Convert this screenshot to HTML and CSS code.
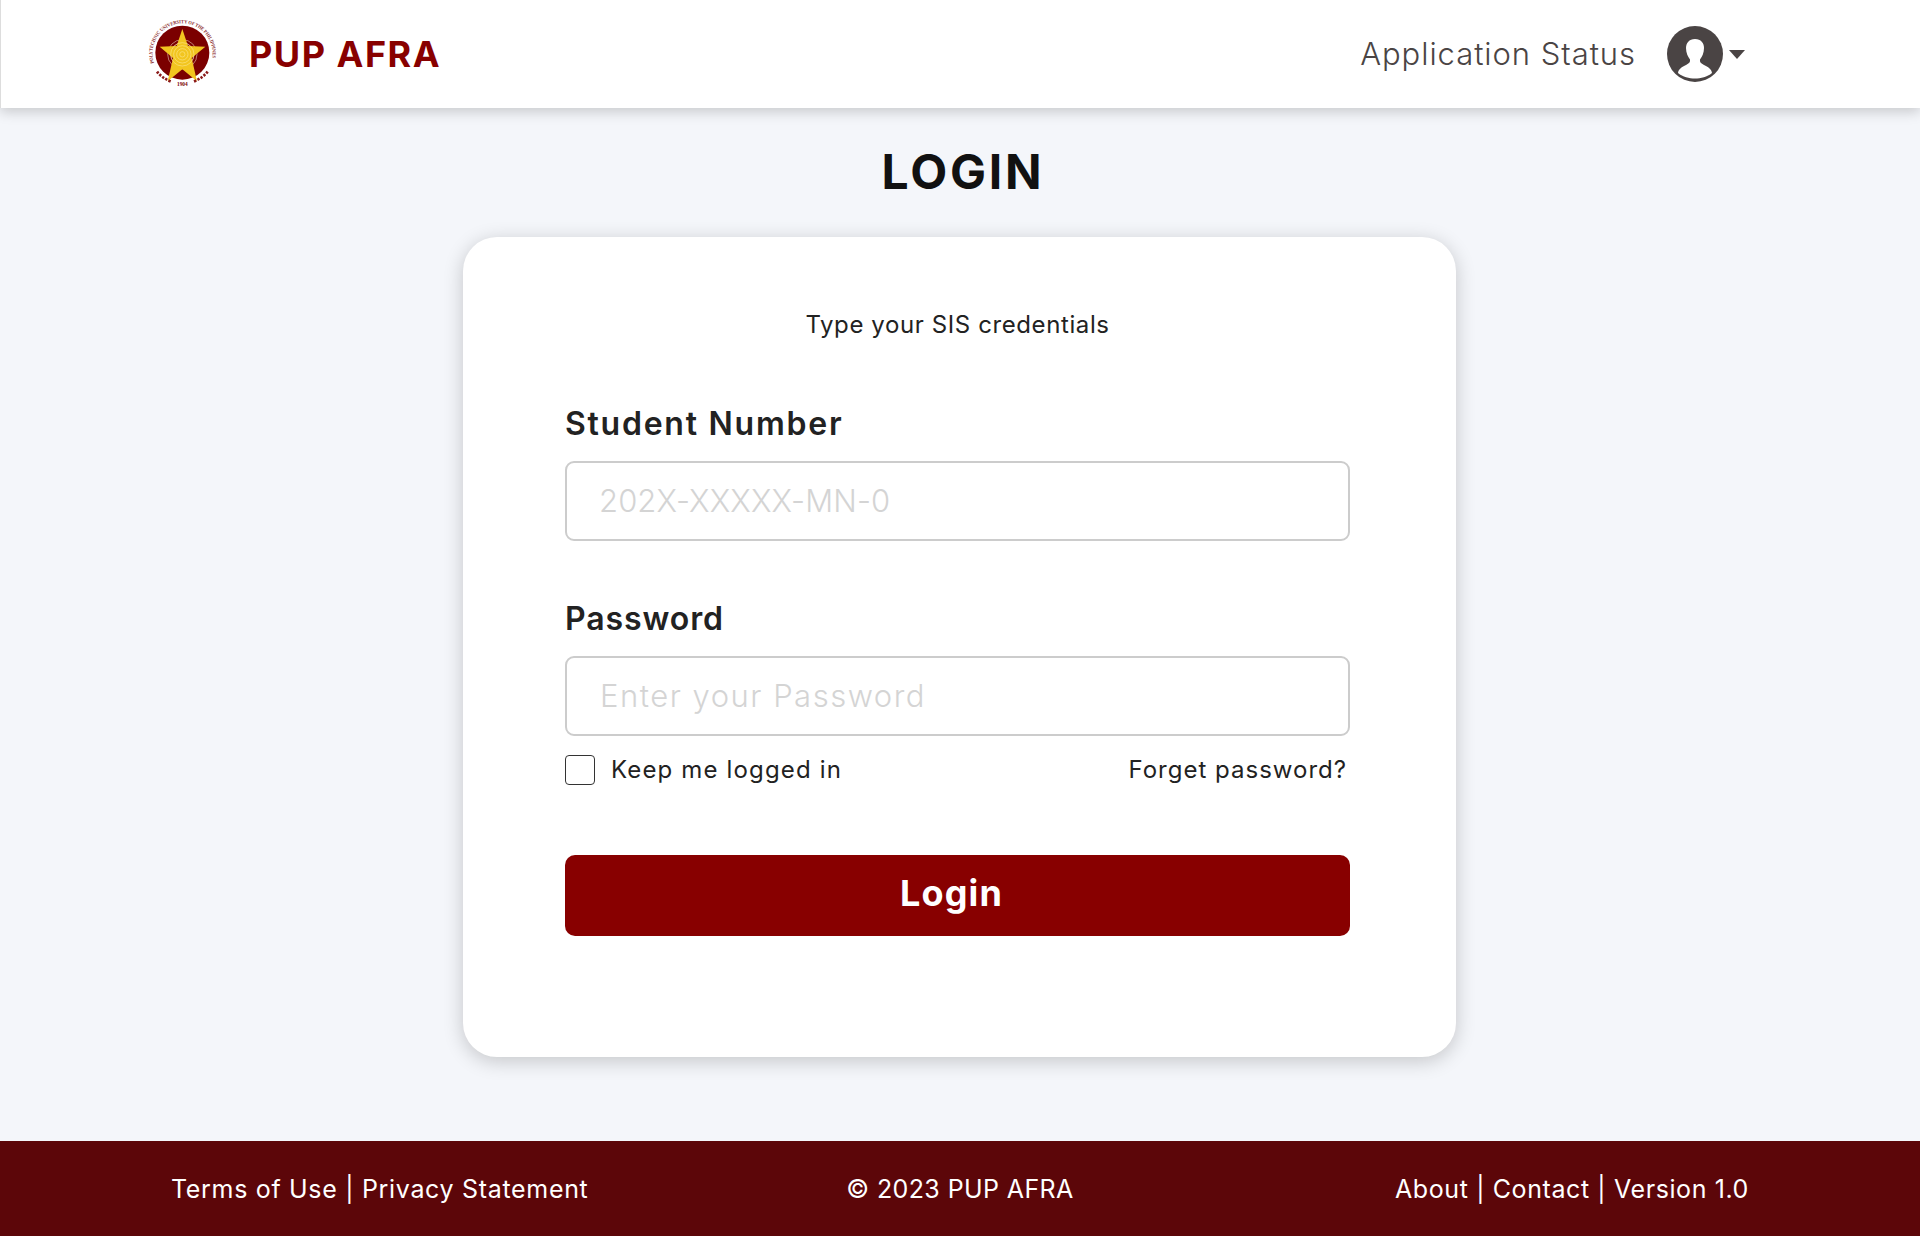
FILE: index.html
```html
<!DOCTYPE html>
<html lang="en">
<head>
<meta charset="utf-8">
<title>PUP AFRA</title>
<link rel="stylesheet" href="styles.css">
</head>
<body>
<header class="topbar">
  <div class="brand">
    <svg class="seal" viewBox="0 0 225 225" aria-hidden="true">
      <defs><path id="ringpath" d="M28 146 A 90 90 0 1 1 197 146"/></defs>
      <circle cx="112" cy="113" r="81" fill="#7b0000"/>
      <text class="seal-ring" textLength="325" lengthAdjust="spacingAndGlyphs"><textPath href="#ringpath" startOffset="2">POLYTECHNIC UNIVERSITY OF THE PHILIPPINES</textPath></text>
      <g fill="none" stroke="#e9c9b8" stroke-width="1.800"><circle cx="112" cy="118" r="44"/><circle cx="112" cy="118" r="35"/></g>
      <path d="M112 42 L129 93 L181 95 L140 129 L156 199 L112 163 L68 199 L84 129 L44 95 L95 93 Z" fill="#f2c51f"/>
      <g fill="none" stroke="#fff0a8" stroke-width="2" opacity=".75"><circle cx="112" cy="118" r="35"/><circle cx="112" cy="118" r="26"/><circle cx="112" cy="118" r="17"/><circle cx="112" cy="118" r="8"/></g>
      <text class="seal-year" x="112" y="214" text-anchor="middle">1904</text>
      <path d="M36 170 Q50 188 78 200 M188 170 Q174 188 146 200" fill="none" stroke="#8b1a1a" stroke-width="8" stroke-dasharray="7 4"/>
    </svg>
    <span class="brand-name">PUP AFRA</span>
  </div>
  <nav class="topnav">
    <a class="nav-link" href="#">Application Status</a>
    <svg class="avatar" viewBox="0 0 56 56" aria-hidden="true">
      <circle cx="28" cy="28" r="28" fill="#4a4444"/>
      <path d="M28 13C22 13 19 17 19 22C19 27 21 31 23 33.500C23.500 36 22 37.500 19 39C15 41 11.500 43 11 47C16 51 22 52.500 28 52.500C34 52.500 40 51 45 47C44.500 43 41 41 37 39C34 37.500 32.500 36 33 33.500C35 31 37 27 37 22C37 17 34 13 28 13Z" fill="#fff"/>
    </svg>
    <span class="caret"></span>
  </nav>
</header>

<main class="page">
  <h1 class="page-title">LOGIN</h1>
  <form class="card">
    <p class="hint">Type your SIS credentials</p>
    <label class="field-label sn-label" for="sn">Student Number</label>
    <input class="field-input field-sn" id="sn" type="text" placeholder="202X-XXXXX-MN-0">
    <label class="field-label pw-label" for="pw">Password</label>
    <input class="field-input field-pw" id="pw" type="text" placeholder="Enter your Password">
    <div class="options">
      <label class="keep"><span class="check"></span><span class="keep-text">Keep me logged in</span></label>
      <a class="forgot" href="#">Forget password?</a>
    </div>
    <button class="submit" type="button">Login</button>
  </form>
</main>

<footer class="footer">
  <span class="foot-left">Terms of Use | Privacy Statement</span>
  <span class="foot-mid">© 2023 PUP AFRA</span>
  <span class="foot-right">About | Contact | Version 1.0</span>
</footer>
</body>
</html>
```
FILE: styles.css
```css
* { box-sizing: border-box; }
html, body { margin: 0; height: 100%; }
body {
  font-family: Inter, "Open Sans", sans-serif;
  background: #f4f6fa;
  color: #222;
  display: flex;
  flex-direction: column;
  min-height: 1236px;
}
.topbar {
  height: 108px;
  flex: none;
  background: #fff;
  border-left: 1px solid #ddd;
  box-shadow: 0 4px 12px rgba(0,0,0,.18);
  display: flex;
  align-items: center;
  justify-content: space-between;
  padding: 0 175px 0 144px;
  position: relative;
}
.brand { display: flex; align-items: center; gap: 29px; }
.seal { width: 75px; height: 75px; display: block; margin-top: -3px; }
.seal-ring { font: 700 15px "Liberation Serif", serif; fill: #8b2a2a; }
.seal-year { font: 700 16px "Liberation Serif", serif; fill: #7b0000; }
.brand-name { font-size: 36px; font-weight: 700; color: #880000; letter-spacing: 1.500px; }
.topnav { display: flex; align-items: center; }
.nav-link { font-size: 31px; font-weight: 300; color: #4a4444; text-decoration: none; letter-spacing: .95px; margin: -2px 31px 0 0; }
.avatar { width: 56px; height: 56px; display: block; }
.caret { width: 0; height: 0; border-left: 8px solid transparent; border-right: 8px solid transparent; border-top: 9px solid #4a4444; margin-left: 6px; }
.page { flex: 1; display: flex; flex-direction: column; align-items: center; }
.page-title { margin: 36px 0 37px 6px; font-size: 48px; line-height: 56px; font-weight: 700; color: #111; letter-spacing: 2.800px; }
.card {
  width: 993px;
  height: 820px;
  margin-right: 1px;
  background: #fff;
  border-radius: 34px;
  box-shadow: 0 4px 20px rgba(0,0,0,.2);
  padding: 73px 106px 0 102px;
  display: flex;
  flex-direction: column;
}
.hint { margin: 0 0 64px; text-align: center; font-size: 24px; line-height: 30px; letter-spacing: .6px; color: #222; }
.field-label { font-size: 32px; line-height: 40px; font-weight: 600; color: #222; margin-bottom: 17px; }
.sn-label { letter-spacing: 1.750px; }
.pw-label { margin-top: 58px; letter-spacing: .9px; }
.field-input {
  width: 100%;
  height: 80px;
  border: 2.500px solid #ccc;
  border-radius: 9px;
  background: #fff;
  padding: 0 32px 2px;
  font: 300 31px Inter, sans-serif;
  color: #222;
}
.field-sn { letter-spacing: .1px; }
.field-pw { letter-spacing: 1.500px; padding-left: 33px; }
.field-input::placeholder { color: #d4d4d4; opacity: 1; }
.options { display: flex; justify-content: space-between; align-items: center; margin-top: 18px; padding-right: 3px; font-size: 24px; line-height: 32px; }
.keep { display: flex; align-items: center; gap: 16px; }
.keep-text { letter-spacing: 1.150px; }
.check { width: 30px; height: 30px; border: 1.500px solid #333; border-radius: 4px; background: #fff; }
.forgot { color: #222; text-decoration: none; letter-spacing: 1px; }
.submit {
  margin-top: 69px;
  width: 100%;
  height: 81px;
  border: 0;
  border-radius: 10px;
  background: #880000;
  color: #fff;
  font: 700 36px Inter, sans-serif;
  letter-spacing: 1.100px;
  padding: 0 12px 5px 0;
}
.footer {
  flex: none;
  height: 95px;
  background: #5c0609;
  color: #fff;
  display: grid;
  grid-template-columns: 1fr auto 1fr;
  align-items: center;
  padding: 0 171px;
  font-size: 25px;
  letter-spacing: .6px;
}
.foot-left { letter-spacing: .68px; }
.foot-mid { letter-spacing: .4px; }
.foot-right { text-align: right; }
```
